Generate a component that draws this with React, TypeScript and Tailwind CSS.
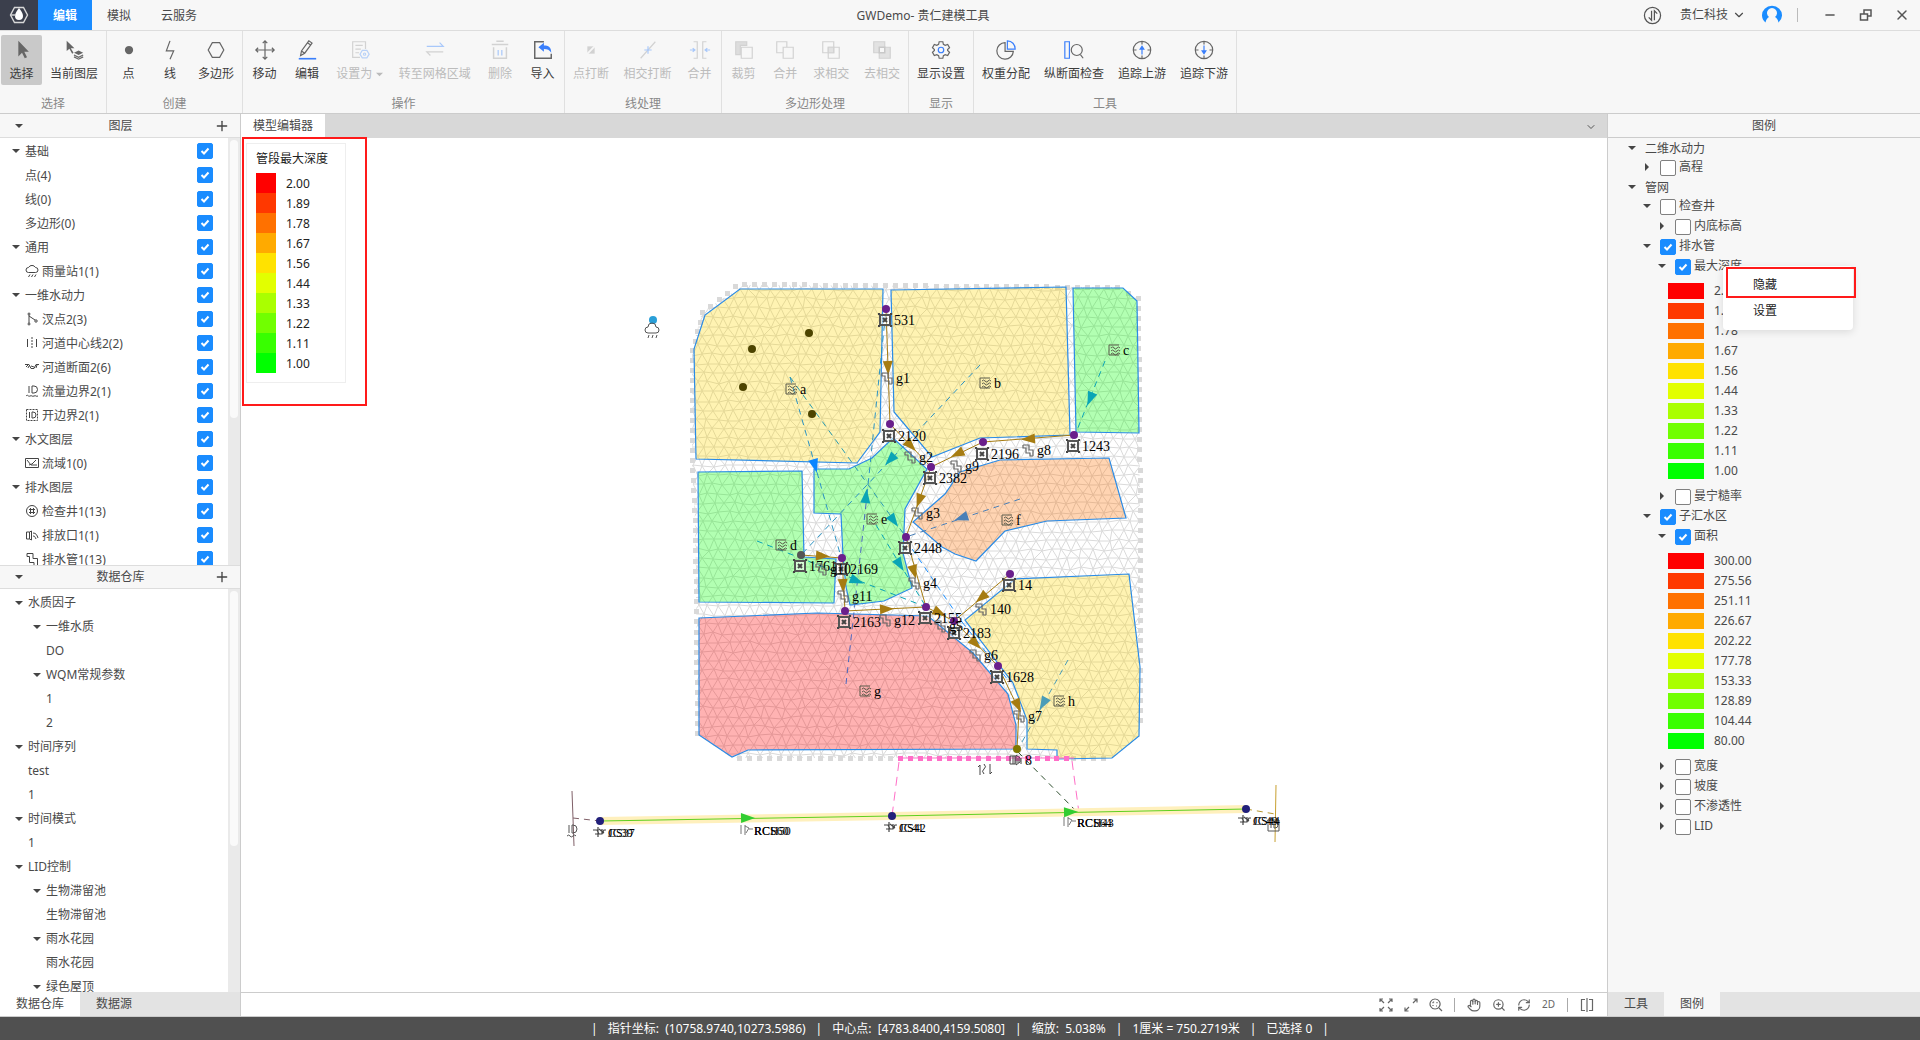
import React from 'react';
import {
  ChevronDown,
  Plus,
  Minus,
  X,
  Hand,
  ZoomIn,
  RefreshCw,
} from 'lucide-react';

const RAMP = ['#ff0000', '#ff3800', '#ff7100', '#ffaa00', '#ffe200', '#e2ff00', '#aaff00', '#71ff00', '#38ff00', '#00ff00'];
const DEPTHS = ['2.00', '1.89', '1.78', '1.67', '1.56', '1.44', '1.33', '1.22', '1.11', '1.00'];
const AREAS = ['300.00', '275.56', '251.11', '226.67', '202.22', '177.78', '153.33', '128.89', '104.44', '80.00'];

/* ---------- small shared pieces ---------- */

function Check({ label, checked = false }: { label: string; checked?: boolean }) {
  return (
    <span className="grid size-4 shrink-0 place-items-center">
      <input
        type="checkbox"
        aria-label={label}
        defaultChecked={checked}
        className="peer col-start-1 row-start-1 size-4 appearance-none rounded-xs border border-[#808080] bg-white checked:border-[#1a8cff] checked:bg-[#1a8cff]"
      />
      <svg viewBox="0 0 16 16" className="pointer-events-none col-start-1 row-start-1 hidden size-4 peer-checked:block" fill="none" stroke="#fff" strokeWidth="2">
        <path d="M4.500 8l2.500 2.500 4.500-5" />
      </svg>
    </span>
  );
}

function Caret({ open = true }: { open?: boolean }) {
  return (
    <svg viewBox="0 0 8 8" className="size-2 shrink-0" fill="#454545">
      {open ? <path d="M0 2h8L4 6z" /> : <path d="M2 0v8l4-4z" />}
    </svg>
  );
}

/* ---------- ribbon icons ---------- */

const G = '#666';
const B = '#3a7ffb';

const icons: Record<string, React.ReactNode> = {
  select: <path d="M8 2v17l4-4 3 6 2.500-1-3-6h5z" fill="#666" stroke="none" />,
  layer: (
    <>
      <path d="M4 2v11l3-2.500 3 5.500 1.500-1-3-5h4z" fill="#666" stroke="none" />
      <path d="M12 15l5-2.500 5 2.500-5 2.500z" fill="#666" stroke="none" />
      <path d="M12 17.500l5 2.500 5-2.500M12 19.500l5 2.500 5-2.500" />
    </>
  ),
  point: <circle cx="12" cy="12" r="4.500" fill="#666" stroke="none" />,
  line: <path d="M12 2L8 13h8l-4 9" />,
  polygon: <path d="M8 4h8l4.500 8-4.500 8H8l-4.500-8z" />,
  move: <path d="M12 2v20M2 12h20M9.500 4.500L12 2l2.500 2.500M9.500 19.500L12 22l2.500-2.500M4.500 9.500L2 12l2.500 2.500M19.500 9.500L22 12l-2.500 2.500" />,
  edit: (
    <>
      <path d="M5 18l1-5L14 2l3.500 2.500-8 11zM12.500 4l3.500 2.500M6 13l3.500 2.500" />
      <path d="M3 21.500h19" stroke={B} strokeWidth="1.800" />
    </>
  ),
  setAs: (
    <>
      <path d="M12 20H4V3h14v8M7 7h8M7 11h6M7 15h4" stroke="#d2d2d2" />
      <path d="M14.500 12.500h5l2.500 4-2.500 4h-5l-2.500-4z" stroke="#b9d2f8" />
      <circle cx="17" cy="16.500" r="1.200" stroke="#b9d2f8" />
    </>
  ),
  toMesh: (
    <>
      <path d="M3 8h18l-4-4" stroke="#a8c8fa" />
      <path d="M21 14H3l4 4" stroke="#d2d2d2" />
    </>
  ),
  trash: (
    <>
      <path d="M3 6h18M8 2.500h8M5 9v12h14V9" stroke="#d2d2d2" strokeWidth="1.600" />
      <path d="M10 12v6M14 12v6" stroke="#a8c8fa" />
    </>
  ),
  importIcon: (
    <>
      <path d="M13 3H3v18h18v-5" strokeWidth="1.600" />
      <path d="M7 9l6-5v3c5 0 8 2 8 8-2-3-4-4-8-4v3z" fill={B} stroke="none" />
    </>
  ),
  pointBreak: (
    <>
      <rect x="8" y="8" width="8" height="8" fill="#d2d2d2" stroke="none" />
      <path d="M7 17L17 7" stroke="#f7f7f7" strokeWidth="2" />
    </>
  ),
  crossBreak: (
    <>
      <path d="M4 21L20 3" stroke="#d2d2d2" />
      <path d="M8 12h8M12 8v8" stroke="#a8c8fa" />
    </>
  ),
  merge: (
    <>
      <path d="M5 3h4v18H5M19 3h-4v18h4" stroke="#d2d2d2" />
      <path d="M1 12h5M4 10l2.500 2L4 14M23 12h-5M20 10l-2.500 2 2.500 2" stroke="#a8c8fa" />
    </>
  ),
  clip: (
    <>
      <path d="M3 3h12v4H8v10H3z" fill="#ddd" stroke="#d2d2d2" />
      <path d="M9 9h12v12H9z" stroke="#d2d2d2" />
    </>
  ),
  union: <path d="M3 3h11v6h7v12H10v-6H3z M10 15V9h4" stroke="#d2d2d2" />,
  intersect: (
    <>
      <path d="M3 3h12v12H3zM9 9h12v12H9z" stroke="#d2d2d2" />
      <path d="M9 9h6v6H9z" fill="#e2e2e2" stroke="#d2d2d2" />
    </>
  ),
  subtract: (
    <>
      <path d="M3 3h12v6h6v12H9v-6H3z" fill="#e2e2e2" stroke="#d2d2d2" />
      <path d="M9 9h6v6H9z" fill="#f7f7f7" stroke="#c8c8c8" strokeWidth="1.600" />
    </>
  ),
  display: (
    <>
      <path d="M10 3h4l.6 2.800 2 1.100 2.700-.9 2 3.500-2.100 1.900v1.200l2.100 1.900-2 3.500-2.700-.9-2 1.100L14 21h-4l-.6-2.800-2-1.100-2.700.9-2-3.500 2.100-1.900v-1.200L2.700 9.500l2-3.500 2.700.9 2-1.100z" />
      <circle cx="12" cy="12" r="3" stroke={B} />
    </>
  ),
  weight: (
    <>
      <path d="M11 4a9 9 0 1 0 9 9.500h-9z" />
      <path d="M13.500 2v9H22c0-5-3.500-9-8.500-9z" stroke={B} />
    </>
  ),
  profile: (
    <>
      <path d="M2 3h5v18H2z" stroke={B} />
      <circle cx="15" cy="12" r="6" />
      <path d="M19 17l3 4" />
    </>
  ),
  up: (
    <>
      <circle cx="12" cy="12" r="9.500" />
      <path d="M12 2.500V6M12 18v3.500M2.500 12H6M18 12h3.500" />
      <path d="M12 17V9" stroke={B} />
      <path d="M10 11l2-3 2 3z" fill={B} stroke={B} />
    </>
  ),
  down: (
    <>
      <circle cx="12" cy="12" r="9.500" />
      <path d="M12 2.500V6M12 18v3.500M2.500 12H6M18 12h3.500" />
      <path d="M12 7v8" stroke={B} />
      <path d="M10 13l2 3 2-3z" fill={B} stroke={B} />
    </>
  ),
};

type Tool = { label: string; icon: string; disabled?: boolean; active?: boolean; menu?: boolean };

function ToolButton({ label, icon, disabled, active, menu }: Tool) {
  return (
    <button
      type="button"
      disabled={disabled}
      className={
        'flex h-[50px] min-w-[41px] flex-col items-center gap-[5px] rounded-xs px-[7px] pt-1 text-[#3c3c3c] disabled:text-[#bcbcbc] ' +
        (active ? 'bg-[#c9c9c9]' : '')
      }
    >
      <svg viewBox="0 0 24 24" className="size-[22px]" fill="none" stroke={G} strokeWidth="1.300">
        {icons[icon]}
      </svg>
      <span className="flex items-center gap-1 leading-4 whitespace-nowrap">
        {label}
        {menu && (
          <svg viewBox="0 0 8 8" className="size-[7px]" fill="#bbb">
            <path d="M0 2h8L4 6z" />
          </svg>
        )}
      </span>
    </button>
  );
}

const groups: { name: string; width: string; tools: Tool[] }[] = [
  { name: '选择', width: 'w-[107px]', tools: [{ label: '选择', icon: 'select', active: true }, { label: '当前图层', icon: 'layer' }] },
  { name: '创建', width: 'w-[136px]', tools: [{ label: '点', icon: 'point' }, { label: '线', icon: 'line' }, { label: '多边形', icon: 'polygon' }] },
  {
    name: '操作',
    width: 'w-[322px]',
    tools: [
      { label: '移动', icon: 'move' },
      { label: '编辑', icon: 'edit' },
      { label: '设置为', icon: 'setAs', disabled: true, menu: true },
      { label: '转至网格区域', icon: 'toMesh', disabled: true },
      { label: '删除', icon: 'trash', disabled: true },
      { label: '导入', icon: 'importIcon' },
    ],
  },
  {
    name: '线处理',
    width: 'w-[157px]',
    tools: [
      { label: '点打断', icon: 'pointBreak', disabled: true },
      { label: '相交打断', icon: 'crossBreak', disabled: true },
      { label: '合并', icon: 'merge', disabled: true },
    ],
  },
  {
    name: '多边形处理',
    width: 'w-[187px]',
    tools: [
      { label: '裁剪', icon: 'clip', disabled: true },
      { label: '合并', icon: 'union', disabled: true },
      { label: '求相交', icon: 'intersect', disabled: true },
      { label: '去相交', icon: 'subtract', disabled: true },
    ],
  },
  { name: '显示', width: 'w-[65px]', tools: [{ label: '显示设置', icon: 'display' }] },
  {
    name: '工具',
    width: 'w-[263px]',
    tools: [
      { label: '权重分配', icon: 'weight' },
      { label: '纵断面检查', icon: 'profile' },
      { label: '追踪上游', icon: 'up' },
      { label: '追踪下游', icon: 'down' },
    ],
  },
];

/* ---------- left panels ---------- */

const treeIcons: Record<string, React.ReactNode> = {
  rain: <path d="M3.500 8.500h7a2.500 2.500 0 0 0 0-5 4 4 0 0 0-7 0 2.500 2.500 0 0 0 0 5zM5 10.500l-1.500 2.500M8 10.500L6.500 13M11 10.500L9.500 13" />,
  fork: (
    <>
      <path d="M4 3v8M4 4l6 4" />
      <circle cx="4" cy="2" r="1" />
      <circle cx="4" cy="12" r="1" />
      <circle cx="11" cy="9" r="1.200" />
    </>
  ),
  center: (
    <>
      <path d="M2.500 3v8M11.500 3v8" />
      <path d="M7 1v12" strokeDasharray="2 1" />
    </>
  ),
  section: <path d="M0 4.500h4l2 4h3l2-4h3M1 7l2-2M3 8l1-2M12 5l-1 3M6 6l3 1" />,
  flow: <path d="M4 2v7M7 2v7h2a3 3 0 0 0 0-7zM1 12c2-2 2 1 4 0s2 1 4 0 2 1 4 0" />,
  open: (
    <>
      <path d="M1.500 1.500h11v11h-11z" strokeDasharray="2 1" />
      <path d="M4.500 4v6M7 4v6h1a3 3 0 0 0 0-6z" />
    </>
  ),
  basin: <path d="M.5 2.500h13v9H.5zM2 4l4 5h6M4 9l3-1 4-4" />,
  manhole: (
    <>
      <circle cx="7" cy="7" r="5.500" />
      <path d="M5.500 4v6M8.500 4v6M4 5.500h6M4 8.500h6" />
    </>
  ),
  outlet: <path d="M1.500 4h3v7h-3zM4.500 4l2-1v9l-2-1M8 5c3 0 4 2 5 5M8 8c2 0 2 1 3 3" />,
  pipe: <path d="M2 1.500h6v5h4.500V14M2 1.500v3h2.500v6H9V14" />,
};

const layers: { label: string; group?: boolean; icon?: string }[] = [
  { label: '基础', group: true },
  { label: '点(4)' },
  { label: '线(0)' },
  { label: '多边形(0)' },
  { label: '通用', group: true },
  { label: '雨量站1(1)', icon: 'rain' },
  { label: '一维水动力', group: true },
  { label: '汊点2(3)', icon: 'fork' },
  { label: '河道中心线2(2)', icon: 'center' },
  { label: '河道断面2(6)', icon: 'section' },
  { label: '流量边界2(1)', icon: 'flow' },
  { label: '开边界2(1)', icon: 'open' },
  { label: '水文图层', group: true },
  { label: '流域1(0)', icon: 'basin' },
  { label: '排水图层', group: true },
  { label: '检查井1(13)', icon: 'manhole' },
  { label: '排放口1(1)', icon: 'outlet' },
  { label: '排水管1(13)', icon: 'pipe' },
];

const store: { label: string; group?: boolean; deep?: boolean }[] = [
  { label: '水质因子', group: true },
  { label: '一维水质', group: true, deep: true },
  { label: 'DO', deep: true },
  { label: 'WQM常规参数', group: true, deep: true },
  { label: '1', deep: true },
  { label: '2', deep: true },
  { label: '时间序列', group: true },
  { label: 'test' },
  { label: '1' },
  { label: '时间模式', group: true },
  { label: '1' },
  { label: 'LID控制', group: true },
  { label: '生物滞留池', group: true, deep: true },
  { label: '生物滞留池', deep: true },
  { label: '雨水花园', group: true, deep: true },
  { label: '雨水花园', deep: true },
  { label: '绿色屋顶', group: true, deep: true },
];

function PanelHeader({ title, className }: { title: string; className: string }) {
  return (
    <div className={'flex h-6 shrink-0 items-center border-[#ddd] bg-[#f7f7f7] pr-2.5 pl-[15px] ' + className}>
      <Caret />
      <h2 className="flex-1 pl-1 text-center">{title}</h2>
      <button type="button" aria-label={'添加' + title}>
        <Plus className="size-4 text-[#444]" strokeWidth={2} />
      </button>
    </div>
  );
}

function Track({ thumb }: { thumb: string }) {
  return (
    <div className="w-3 shrink-0 bg-[#eaeaea] px-0.5 pt-0.5">
      <div className={'rounded-full bg-[#fafafa] ' + thumb} />
    </div>
  );
}

function LeftPanel() {
  return (
    <aside className="flex w-[241px] shrink-0 flex-col border-r border-[#ccc] bg-white">
      <PanelHeader title="图层" className="border-b" />
      <div className="flex min-h-0 flex-[427] overflow-hidden">
        <ul className="flex-1 pt-px">
          {layers.map((l) => (
            <li key={l.label} className="flex h-6 items-center pr-[15px] pl-3">
              <span className="flex w-[13px] shrink-0">{l.group && <Caret />}</span>
              {l.icon && (
                <svg viewBox="0 0 14 14" className="mr-[3px] size-3.5 shrink-0" fill="none" stroke="#444">
                  {treeIcons[l.icon]}
                </svg>
              )}
              <span className="flex-1 pt-px">{l.label}</span>
              <Check label={l.label} checked />
            </li>
          ))}
        </ul>
        <Track thumb="h-[278px]" />
      </div>
      <PanelHeader title="数据仓库" className="border-y" />
      <div className="flex min-h-0 flex-[403] overflow-hidden">
        <ul className="flex-1 pt-0.5">
          {store.map((s, i) => (
            <li key={i} className={'flex h-6 items-center ' + (s.deep ? 'pl-[33px]' : 'pl-[15px]')}>
              <span className="flex w-[13px] shrink-0">{s.group && <Caret />}</span>
              {s.label}
            </li>
          ))}
        </ul>
        <Track thumb="h-[255px]" />
      </div>
      <div className="flex h-6 shrink-0 bg-[#e3e3e3]">
        <button type="button" className="w-20 bg-white">数据仓库</button>
        <button type="button" className="px-4">数据源</button>
      </div>
    </aside>
  );
}

/* ---------- map drawing ---------- */

type Pt = [number, number];

const OUTLINE: Pt[] = [
  [744, 285], [1117, 287], [1138, 298], [1140, 520], [1140, 736], [1113, 758], [732, 758], [698, 735], [695, 520], [692, 470], [692, 350], [702, 312],
];

const zones = [
  { fill: '#ffd700', d: '740,289 883,289 880,432 857,463 696,459 694,349 705,315' },
  { fill: '#ffd700', d: '891,290 1066,287 1070,435 980,438 932,457 894,412' },
  { fill: '#00ff00', d: '1073,288 1123,288 1137,301 1139,433 1076,432' },
  { fill: '#ff7000', d: '1000,460 1109,458 1126,518 1047,521 1005,531 976,561 955,554 942,547 913,522 945,494 960,472' },
  { fill: '#00ff00', d: '893,438 927,469 905,509 903,553 912,588 884,601 850,605 846,587 843,557 841,514 814,513 814,469 849,469 872,458' },
  { fill: '#00ff00', d: '698,472 802,471 804,557 836,559 834,603 699,602' },
  { fill: '#ff0000', d: '699,618 817,613 928,616 973,653 1008,694 1016,725 1016,749 748,750 732,757 699,735' },
  { fill: '#ffd700', d: '1015,579 1129,574 1140,667 1139,736 1112,758 1057,759 1057,750 1027,749 1027,720 1013,683 965,620' },
];

function meshPath() {
  let seed = 7;
  const rnd = () => {
    seed = (seed * 1103515245 + 12345) % 2147483648;
    return seed / 2147483648 - 0.5;
  };
  const rows: Pt[][] = [];
  for (let r = 0; r < 53; r++) {
    const row: Pt[] = [];
    for (let c = 0; c < 46; c++) {
      row.push([Math.round(682 + c * 10.4 + (r % 2) * 5 + rnd() * 3), Math.round(280 + r * 9.3 + rnd() * 3)]);
    }
    rows.push(row);
  }
  let d = '';
  for (let r = 0; r < 52; r++) {
    for (let c = 1; c < 45; c++) {
      const [x, y] = rows[r][c];
      const k = r % 2;
      const right = rows[r][c + 1];
      const a = rows[r + 1][c - 1 + k];
      const b = rows[r + 1][c + k];
      d += `M${right[0]} ${right[1]}L${x} ${y}L${a[0]} ${a[1]}M${x} ${y}L${b[0]} ${b[1]}`;
    }
  }
  return d;
}

function along(pts: Pt[], step: number): Pt[] {
  const out: Pt[] = [];
  for (let i = 0; i < pts.length - 1; i++) {
    const [x1, y1] = pts[i];
    const [x2, y2] = pts[i + 1];
    const n = Math.max(1, Math.round(Math.hypot(x2 - x1, y2 - y1) / step));
    for (let k = 0; k < n; k++) out.push([Math.round(x1 + ((x2 - x1) * k) / n), Math.round(y1 + ((y2 - y1) * k) / n)]);
  }
  return out;
}

const MESH = meshPath();
const EDGE = [...along([[739, 758], [900, 758]], 10), ...along([[1073, 758], [1113, 758]], 10), ...along([[697, 733], [695, 520], [692, 470], [692, 350], [702, 312], [735, 286], [744, 284], [1117, 287], [1138, 298], [1140, 520], [1140, 730]], 10)];
const PINK = along([[900, 758], [1076, 758]], 10);

function Arrow({ at, from, to, fill }: { at: Pt; from: Pt; to: Pt; fill: string }) {
  const deg = (Math.atan2(to[1] - from[1], to[0] - from[0]) * 180) / Math.PI;
  return <path d="M-7-5L7 0L-7 5z" fill={fill} transform={`translate(${at[0]} ${at[1]}) rotate(${deg})`} />;
}

const pipes: { from: Pt; to: Pt; at: Pt }[] = [
  { from: [886, 309], to: [890, 424], at: [888, 368] },
  { from: [890, 424], to: [931, 467], at: [911, 446] },
  { from: [983, 442], to: [931, 467], at: [957, 454] },
  { from: [1074, 435], to: [983, 442], at: [1028, 439] },
  { from: [931, 467], to: [906, 537], at: [919, 501] },
  { from: [906, 537], to: [926, 607], at: [914, 572] },
  { from: [801, 555], to: [842, 558], at: [823, 556] },
  { from: [842, 558], to: [845, 611], at: [843, 586] },
  { from: [845, 611], to: [926, 607], at: [887, 609] },
  { from: [926, 607], to: [954, 621], at: [940, 613] },
  { from: [1010, 574], to: [954, 621], at: [981, 598] },
  { from: [954, 621], to: [998, 666], at: [976, 644] },
  { from: [998, 666], to: [1019, 710], at: [1018, 706] },
];

const links: { from: Pt; to: Pt; at: Pt; line: string; fill: string }[] = [
  { from: [790, 377], to: [841, 557], at: [815, 466], line: '#2b93c4', fill: '#0a84ff' },
  { from: [790, 377], to: [906, 537], at: [894, 521], line: '#2b9bb0', fill: '#0aa5b5' },
  { from: [980, 365], to: [801, 555], at: [890, 460], line: '#2b93c4', fill: '#0aa5b5' },
  { from: [1105, 361], to: [1075, 435], at: [1090, 399], line: '#0aa5b5', fill: '#0aa5b5' },
  { from: [1020, 499], to: [906, 537], at: [961, 518], line: '#4a80b8', fill: '#4a80b8' },
  { from: [876, 525], to: [926, 607], at: [900, 565], line: '#0aa5b5', fill: '#0aa5b5' },
  { from: [757, 541], to: [926, 607], at: [857, 581], line: '#0aa5b5', fill: '#0aa5b5' },
  { from: [867, 495], to: [886, 309], at: [866, 496], line: '#2b93c4', fill: '#0aa5b5' },
  { from: [1068, 660], to: [1022, 742], at: [1043, 704], line: '#4a9cb8', fill: '#4a9cb8' },
];

const nodes: { x: number; y: number; label: string }[] = [
  { x: 885, y: 320, label: '531' },
  { x: 889, y: 436, label: '2120' },
  { x: 930, y: 478, label: '2382' },
  { x: 982, y: 454, label: '2196' },
  { x: 1073, y: 446, label: '1243' },
  { x: 905, y: 548, label: '2448' },
  { x: 800, y: 566, label: '1761' },
  { x: 841, y: 569, label: '2169' },
  { x: 844, y: 622, label: '2163' },
  { x: 925, y: 618, label: '2155' },
  { x: 954, y: 633, label: '2183' },
  { x: 997, y: 677, label: '1628' },
  { x: 1009, y: 585, label: '14' },
];

const conduits: [number, number, string][] = [
  [887, 378, 'g1'], [910, 457, 'g2'], [956, 466, 'g9'], [1028, 450, 'g8'], [917, 513, 'g3'], [914, 583, 'g4'], [821, 569, 'g10'],
  [843, 596, 'g11'], [885, 620, 'g12'], [940, 626, 'g5'], [975, 655, 'g6'], [1019, 716, 'g7'], [981, 609, '140'],
];

const catchments: [number, number, string][] = [
  [791, 389, 'a'], [985, 383, 'b'], [1114, 350, 'c'], [781, 545, 'd'], [872, 519, 'e'], [1007, 520, 'f'], [865, 691, 'g'], [1059, 701, 'h'],
];

const dots: Pt[] = [[886, 309], [890, 424], [931, 467], [983, 442], [1074, 435], [906, 537], [842, 558], [845, 611], [926, 607], [954, 621], [998, 666], [1010, 574]];

const river: { x: number; y: number; names: string[] }[] = [
  { x: 608, y: 837, names: ['CS37', 'JC39'] },
  { x: 754, y: 835, names: ['RCH50', 'RCS60'] },
  { x: 899, y: 832, names: ['CS42', 'JC41'] },
  { x: 1077, y: 827, names: ['RCH43', 'RCS64'] },
  { x: 1253, y: 825, names: ['CS44', 'JC49'] },
];

function ModelMap() {
  return (
    <svg viewBox="241 138 1366 854" className="block size-full" fontFamily="'Liberation Serif', serif" fontSize="14" role="img" aria-label="管网模型">
      <defs>
        <clipPath id="extent">
          <polygon points={OUTLINE.map((p) => p.join(',')).join(' ')} />
        </clipPath>
      </defs>
      <path d={MESH} clipPath="url(#extent)" fill="none" stroke="#dadada" />
      {EDGE.map(([x, y], i) => (
        <rect key={i} x={x - 2} y={y - 2} width="5" height="5" fill="#d9d9d9" />
      ))}
      {zones.map((z) => (
        <polygon key={z.d} points={z.d} fill={z.fill} fillOpacity="0.3" stroke="#2a8be6" strokeWidth="1.200" />
      ))}

      <g strokeDasharray="6 5" fill="none">
        {links.map((l, i) => (
          <path key={i} d={`M${l.from[0]} ${l.from[1]}L${l.to[0]} ${l.to[1]}`} stroke={l.line} />
        ))}
        <path d="M846 684L867 495" stroke="#4a68c0" />
        <path d="M906 540L962 622L1008 680" stroke="#1e90ff" />
        <path d="M899 762L892 816M1072 761L1079 813" stroke="#ff6ec7" strokeDasharray="9 6" />
        <path d="M1018 752L1078 813" stroke="#2f4f2f" />
        <path d="M573 818L600 821" stroke="#806068" />
        <path d="M1246 809L1275 814" stroke="#b89830" />
      </g>
      {links.map((l, i) => (
        <Arrow key={i} at={l.at} from={l.from} to={l.to} fill={l.fill} />
      ))}

      {pipes.map((p, i) => (
        <g key={i}>
          <path d={`M${p.from[0]} ${p.from[1]}L${p.to[0]} ${p.to[1]}`} stroke="#a67c12" />
          <Arrow at={p.at} from={p.from} to={p.to} fill="#a67c12" />
        </g>
      ))}
      <path d="M1019 710L1017 749" stroke="#a67c12" />

      {dots.map(([x, y]) => (
        <circle key={x} cx={x} cy={y} r="4" fill="#6a1f8c" />
      ))}
      <circle cx="801" cy="555" r="4" fill="#555" />
      <circle cx="1017" cy="749" r="4" fill="#807800" />
      {[[809, 333], [752, 349], [743, 387], [812, 414]].map(([x, y]) => (
        <circle key={x} cx={x} cy={y} r="4" fill="#4d4400" />
      ))}

      {nodes.map((n) => (
        <g key={n.label}>
          <rect x={n.x - 5} y={n.y - 5} width="10" height="10" fill="#fff" fillOpacity="0.500" stroke="#555" strokeWidth="2" />
          <path
            d={`M${n.x - 6} ${n.y - 6}h.1M${n.x + 6} ${n.y - 6}h.1M${n.x - 6} ${n.y + 6}h.1M${n.x + 6} ${n.y + 6}h.1`}
            stroke="#444"
            strokeWidth="2"
            strokeLinecap="square"
          />
          <path d={`M${n.x - 2} ${n.y - 2}l4 4M${n.x + 2} ${n.y - 2}l-4 4`} stroke="#444" strokeWidth="2" />
          <text x={n.x + 9} y={n.y + 5}>{n.label}</text>
        </g>
      ))}
      {conduits.map(([x, y, t]) => (
        <g key={t}>
          <path d={`M${x - 5} ${y - 5}h6v5h4v6M${x - 5} ${y - 5}v3h3v5h4v3h3`} fill="none" stroke="#666" strokeWidth="1.200" />
          <text x={x + 9} y={y + 5}>{t}</text>
        </g>
      ))}
      {catchments.map(([x, y, t]) => (
        <g key={t}>
          <path
            d={`M${x + 5} ${y - 5}h-10v10h10M${x - 3} ${y - 2}q1.500-2 3 0t3 0t3 0M${x - 3} ${y + 1}q1.500-2 3 0t3 0t3 0M${x - 3} ${y + 4}q1.500-2 3 0t3 0t3 0`}
            fill="none"
            stroke="#5a5a4a"
          />
          <text x={x + 9} y={y + 5}>{t}</text>
        </g>
      ))}

      <path d="M900 758H1074" stroke="#ff6ec7" />
      {PINK.map(([x, y]) => (
        <rect key={x} x={x - 2} y={y - 2} width="5" height="5" fill="#ff6ec7" />
      ))}
      <path d="M1010 756h5v8h-5zM1013 756v8M1016 755l4 3v4l-4 3zM1018 758v5M1021 758v6" fill="none" stroke="#444" />
      <text x="1025" y="765">8</text>
      <path d="M980 765v10M984 764q3 3 0 5t0 5M990 764v10M980 765l-2 2M990 774l2-2" fill="none" stroke="#444" />

      {/* rain gauge */}
      <circle cx="653" cy="320" r="4" fill="#2a9fd8" />
      <path d="M648 333h8a3 3 0 0 0 0-6 4 4 0 0 0-8 0 3 3 0 0 0 0 6zM649 335l-1 3M653 335l-1 3M657 335l-1 3" fill="none" stroke="#555" />

      {/* river reach */}
      <path d="M600 821L892 816L1246 809" fill="none" stroke="#fff0bd" strokeWidth="8" />
      <path d="M600 821L892 816L1246 809" fill="none" stroke="#5fd01e" />
      <Arrow at={[748, 818]} from={[600, 821]} to={[892, 816]} fill="#32cd32" />
      <Arrow at={[1071, 812]} from={[892, 816]} to={[1246, 809]} fill="#32cd32" />
      <path d="M572 791L574 846" stroke="#806068" />
      <path d="M1276 785L1275 842" stroke="#c8a030" />
      {[[600, 821], [892, 816], [1246, 809]].map(([x, y]) => (
        <circle key={x} cx={x} cy={y} r="4" fill="#22207a" />
      ))}
      <path d="M569 825v8M572 825v8h1a3 3 0 0 0 0-8zM567 836q2-2 3 0t3 0t3 0" fill="none" stroke="#555" />
      <path d="M1268 820h11v11h-11zM1271 822v6M1274 822v6h1a2 2 0 0 0 0-6z" fill="none" stroke="#555" />
      {river.map((r) => (
        <g key={r.x} fontSize="12">
          {r.names[0].length === 4 ? (
            <path
              d={`M${r.x - 15} ${r.y - 7}h4l2 4h3l2-4h2M${r.x - 10} ${r.y - 10}v10M${r.x - 9} ${r.y - 8}l5 4M${r.x - 13} ${r.y - 3}h4M${r.x - 6} ${r.y - 8}v5`}
              fill="none"
              stroke="#444"
              strokeWidth="1.200"
            />
          ) : (
            <path d={`M${r.x - 13} ${r.y - 10}v9M${r.x - 9} ${r.y - 10}v10M${r.x - 9} ${r.y - 9}l4 2-3 5M${r.x - 5} ${r.y - 6}h4`} fill="none" stroke="#777" />
          )}
          {r.names.map((n) => (
            <text key={n} x={r.x} y={r.y}>{n}</text>
          ))}
        </g>
      ))}
    </svg>
  );
}

function MapLegend() {
  return (
    <div className="absolute -top-px left-px w-[125px] border-2 border-[#ff1a1a] pt-1 pb-[21px] pl-0.5">
      <section className="w-[100px] border border-[#eee] bg-white pb-[9px] pl-[9px] text-[#222]">
        <h3 className="leading-[29px]">管段最大深度</h3>
        <ul>
          {DEPTHS.map((v, i) => (
            <li key={v} className="flex h-5 items-center gap-2.5">
              <span className="h-5 w-5" style={{ background: RAMP[i] }} />
              <span className="pt-0.5">{v}</span>
            </li>
          ))}
        </ul>
      </section>
    </div>
  );
}

function ViewButton({ label, children }: { label: string; children: React.ReactNode }) {
  return (
    <button type="button" aria-label={label} className="flex w-[25px] items-center justify-center text-[#666]">
      {children}
    </button>
  );
}

function Glyph({ d }: { d: string }) {
  return (
    <svg viewBox="0 0 14 14" className="size-3.5" fill="none" stroke="currentColor" strokeWidth="1.200">
      <path d={d} />
    </svg>
  );
}

function Workspace() {
  return (
    <main className="flex min-w-0 flex-1 flex-col">
      <div className="flex h-6 shrink-0 items-stretch justify-between bg-[#d8d8d8]">
        <button type="button" className="bg-white px-3">模型编辑器</button>
        <button type="button" aria-label="标签列表" className="px-2.5 pt-0.5">
          <ChevronDown className="size-3 text-[#555]" />
        </button>
      </div>
      <div className="relative min-h-0 flex-1 bg-white">
        <ModelMap />
        <MapLegend />
      </div>
      <div className="flex h-6 shrink-0 items-center justify-end border-t border-[#ccc] bg-white pr-2">
        <ViewButton label="全图"><Glyph d="M5 5L1 1M1 4V1h3M9 5l4-4M10 1h3v3M5 9l-4 4M1 10v3h3M9 9l4 4M13 10v3h-3" /></ViewButton>
        <ViewButton label="缩放"><Glyph d="M9 5l4-4M9.500 1H13v3.500M5 9l-4 4M1 9.500V13h3.500" /></ViewButton>
        <ViewButton label="缩放至选择"><Glyph d="M6 1a5 5 0 1 0 .1 0M10 10l3 3M4 4h1.200M4 4v1.200M8 4v1.200M8 8H7M4 8V7" /></ViewButton>
        <span className="mx-1.5 h-3.5 w-px bg-[#aaa]" />
        <ViewButton label="平移"><Hand className="size-3.5" strokeWidth={2} /></ViewButton>
        <ViewButton label="放大"><ZoomIn className="size-3.5" strokeWidth={2} /></ViewButton>
        <ViewButton label="刷新"><RefreshCw className="size-3.5" strokeWidth={2} /></ViewButton>
        <button type="button" className="w-[25px] text-[10px] text-[#666]">2D</button>
        <span className="mx-1.5 h-3.5 w-px bg-[#aaa]" />
        <ViewButton label="分屏"><Glyph d="M5 1.500H1.500v11H5M9 1.500h3.500v11H9M7 0v14" /></ViewButton>
      </div>
    </main>
  );
}

/* ---------- right panel ---------- */

function LegendRow({ label, deep, open, checked, children }: { label: string; deep?: boolean; open?: boolean; checked?: boolean; children?: React.ReactNode }) {
  return (
    <div className={'relative flex h-5 items-center ' + (deep ? 'pl-[50px]' : 'pl-[35px]')}>
      <span className="flex w-[17px] pb-0.5"><Caret open={!!open} /></span>
      <Check label={label} checked={checked} />
      <span className="pb-0.5 pl-[3px]">{label}</span>
      {children}
    </div>
  );
}

function RootRow({ label }: { label: string }) {
  return (
    <div className="flex h-[19px] items-center gap-[9px] pl-5">
      <span className="pb-0.5"><Caret /></span>
      {label}
    </div>
  );
}

function Ramp({ values }: { values: string[] }) {
  return (
    <ul className="pt-1 pb-1.5 pl-[60px]">
      {values.map((v, i) => (
        <li key={v} className="flex h-5 items-center gap-2.5">
          <span className="h-4 w-9" style={{ background: RAMP[i] }} />
          {v}
        </li>
      ))}
    </ul>
  );
}

function ContextMenu() {
  return (
    <div className="absolute top-[9px] left-[115px] z-10 h-16 w-[130px] rounded-sm bg-white pt-1.5 text-[#222] shadow-[0_2px_8px_rgba(0,0,0,0.12)]">
      <button type="button" className="block h-[26px] w-full pl-[30px] text-left">隐藏</button>
      <button type="button" className="block h-[26px] w-full pl-[30px] text-left">设置</button>
      <span className="pointer-events-none absolute top-px left-[3px] h-[31px] w-[130px] border-2 border-[#ff1a1a]" />
    </div>
  );
}

function RightPanel() {
  return (
    <aside className="flex w-[313px] shrink-0 flex-col border-l border-[#ccc] bg-[#f7f7f7]">
      <h2 className="h-6 shrink-0 border-b border-[#ccc] text-center leading-[23px]">图例</h2>
      <div className="min-h-0 flex-1 pt-px">
        <RootRow label="二维水动力" />
        <LegendRow label="高程" />
        <RootRow label="管网" />
        <LegendRow label="检查井" open />
        <LegendRow label="内底标高" deep />
        <LegendRow label="排水管" open checked />
        <LegendRow label="最大深度" deep open checked>
          <ContextMenu />
        </LegendRow>
        <Ramp values={DEPTHS} />
        <LegendRow label="曼宁糙率" deep />
        <LegendRow label="子汇水区" open checked />
        <LegendRow label="面积" deep open checked />
        <Ramp values={AREAS} />
        <LegendRow label="宽度" deep />
        <LegendRow label="坡度" deep />
        <LegendRow label="不渗透性" deep />
        <LegendRow label="LID" deep />
      </div>
      <div className="flex h-6 shrink-0 bg-[#e3e3e3]">
        <button type="button" className="w-14">工具</button>
        <button type="button" className="w-14 bg-[#f7f7f7]">图例</button>
      </div>
    </aside>
  );
}

/* ---------- frame ---------- */

function TitleBar() {
  return (
    <header className="grid h-[31px] shrink-0 grid-cols-[1fr_auto_1fr] items-stretch border-b border-[#ddd]">
      <nav className="flex">
        <span className="flex w-[38px] items-center justify-center bg-[#3b3f4c]">
          <svg viewBox="0 0 20 20" className="size-5" fill="none" stroke="#d8d8d8" strokeWidth="1.400">
            <path d="M5.500 2.500h9l4 7.500-4 7.500h-9L1.500 10z" />
            <path d="M10 3c2 3 4 5 4 8a4 4 0 0 1-8 0c0-3 2-5 4-8z" fill="#fff" stroke="none" />
            <path d="M2 10h5" />
          </svg>
        </span>
        <button type="button" className="w-[54px] bg-[#1a8cff] pt-px font-bold text-white">编辑</button>
        <button type="button" className="w-[54px] pt-px">模拟</button>
        <button type="button" className="w-[66px] pt-px">云服务</button>
      </nav>
      <h1 className="self-center pt-px pr-[74px]">GWDemo- 贵仁建模工具</h1>
      <div className="flex items-center justify-end pr-2.5">
        <button type="button" aria-label="同步">
          <svg viewBox="0 0 20 20" className="size-[19px]" fill="none" stroke="#555" strokeWidth="1.300">
            <circle cx="10" cy="10" r="8.500" />
            <path d="M9 5v10l-3-3M12 15V5l3 3" />
          </svg>
        </button>
        <button type="button" className="ml-[18px] flex items-center gap-1">
          贵仁科技
          <ChevronDown className="size-3.5" />
        </button>
        <button type="button" aria-label="账户" className="ml-4">
          <svg viewBox="0 0 20 20" className="size-5">
            <path d="M3.500 17.500a10 9.500 0 1 1 13 0c-.5-3-2-4.500-3.500-5.500a5 5 0 1 0-6 0c-1.500 1-3 2.500-3.500 5.500z" fill="#1a8cff" />
            <circle cx="10" cy="8" r="3.500" fill="#f7f7f7" />
          </svg>
        </button>
        <span className="ml-[15px] h-3.5 w-px bg-[#bbb]" />
        <button type="button" aria-label="最小化" className="ml-[25px]"><Minus className="size-3.5 text-[#555]" strokeWidth={2.5} /></button>
        <button type="button" aria-label="还原" className="ml-[22px]">
          <svg viewBox="0 0 14 14" className="size-3.5" fill="none" stroke="#555" strokeWidth="1.500">
            <path d="M1.500 6h7v6h-7zM5 6V2h7v6H8.500" />
          </svg>
        </button>
        <button type="button" aria-label="关闭" className="ml-[21px]"><X className="size-4 text-[#555]" strokeWidth={2.2} /></button>
      </div>
    </header>
  );
}

function Ribbon() {
  return (
    <div className="flex h-[83px] shrink-0 border-b border-[#ccc]">
      {groups.map((g) => (
        <section key={g.name} className={'flex shrink-0 flex-col justify-between border-r border-[#e0e0e0] px-px pt-1 pb-px ' + g.width}>
          <div className="flex justify-between">
            {g.tools.map((t) => (
              <ToolButton key={t.label} {...t} />
            ))}
          </div>
          <h2 className="text-center leading-4 text-[#888]">{g.name}</h2>
        </section>
      ))}
    </div>
  );
}

const status = ['指针坐标:  (10758.9740,10273.5986)', '中心点:  [4783.8400,4159.5080]', '缩放:  5.038%', '1厘米 = 750.2719米', '已选择 0'];

export default function App() {
  return (
    <div className="flex h-screen flex-col overflow-hidden bg-[#f7f7f7] font-['Noto_Sans','Noto_Sans_CJK_SC',sans-serif] text-xs text-[#4a4a4a]">
      <TitleBar />
      <Ribbon />
      <div className="flex min-h-0 flex-1">
        <LeftPanel />
        <Workspace />
        <RightPanel />
      </div>
      <footer className="flex h-6 shrink-0 items-center justify-center gap-2.5 border-t border-[#ccc] bg-[#505050] whitespace-pre text-white">
        <span>|</span>
        {status.map((s) => (
          <React.Fragment key={s}>
            <span>{s}</span>
            <span>|</span>
          </React.Fragment>
        ))}
      </footer>
    </div>
  );
}
